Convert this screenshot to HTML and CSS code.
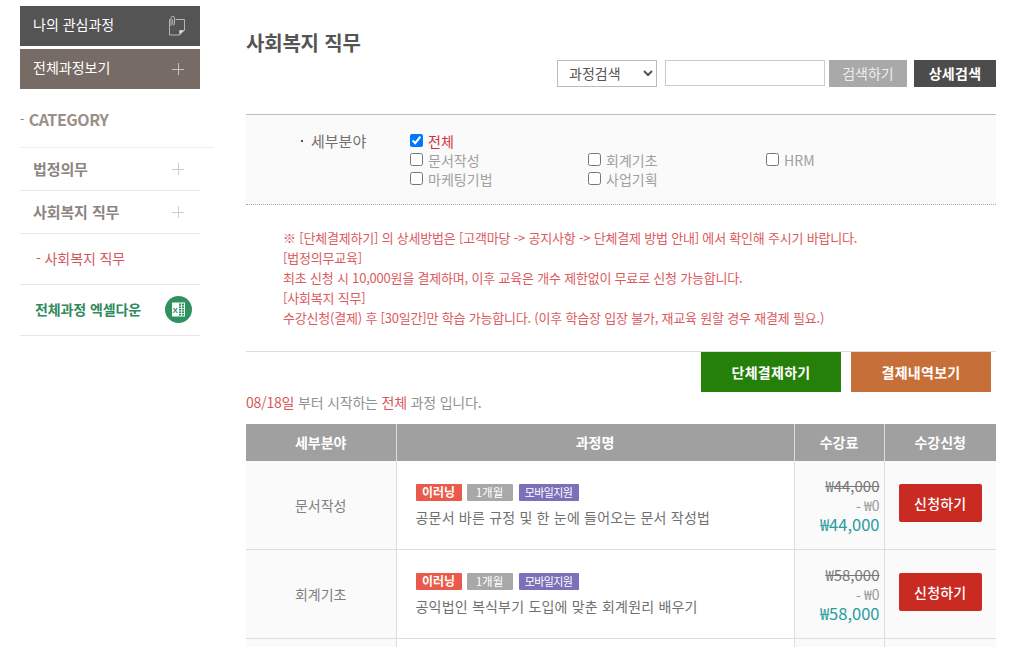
FILE: index.html
```html
<!DOCTYPE html>
<html lang="ko">
<head>
<meta charset="utf-8">
<title>사회복지 직무</title>
<link rel="stylesheet" href="styles.css">
</head>
<body>
<div class="page">
  <aside class="side">
    <a class="top-btn dark"><span class="tb-text">나의 관심과정</span>
      <svg class="clip" width="16" height="20" viewBox="0 0 16 20" fill="none" stroke="#b5b5b5" stroke-width="1"><path d="M6.5 3.5H15.5V14L10.5 19H.5V3.5H1.5"/><path d="M10.5 19V14.5H15.5"/><path d="M11 18l4-3.5h-4z" fill="#ddd" stroke="none"/><path d="M2 10V2a1.5 1.5 0 0 1 3.5 0V8a.9.9 0 0 1-1.8 0V3.5"/></svg>
    </a>
    <a class="top-btn brown"><span class="tb-text">전체과정보기</span><i class="plus light"></i></a>
    <h3 class="cat"><span class="dash">-</span>CATEGORY</h3>
    <ul class="menu">
      <li class="m-row first"><span class="m-text">법정의무</span><i class="plus"></i></li>
      <li class="m-row"><span class="m-text">사회복지 직무</span><i class="plus"></i></li>
      <li class="m-sub">- 사회복지 직무</li>
      <li class="m-excel"><span class="m-text x-text">전체과정 엑셀다운</span>
        <svg class="xls" width="27" height="27" viewBox="0 0 27 27"><circle cx="13.5" cy="13.5" r="13.5" fill="#2e9160"/><rect x="7" y="6.5" width="6" height="14" fill="#fff"/><rect x="13.5" y="7" width="6" height="13" fill="#2e9160" stroke="#fff"/><path d="M13.5 10h6M13.5 12.5h6M13.5 15h6M13.5 17.5h6M16.5 7v13" stroke="#fff" stroke-width=".8"/><text x="7.6" y="16.5" font-size="8" font-family="Liberation Sans" fill="#2e9160" font-weight="700">X</text></svg>
      </li>
    </ul>
  </aside>
  <main class="main">
    <h2 class="title">사회복지 직무</h2>
    <form class="search">
      <select class="sel"><option>과정검색</option></select>
      <input class="txt" type="text">
      <button type="button" class="s-btn grey">검색하기</button>
      <button type="button" class="s-btn black">상세검색</button>
    </form>
    <section class="filter">
      <div class="f-label"><span class="bullet"></span>세부분야</div>
      <div class="f-opts">
        <label class="opt all"><input type="checkbox" checked><span class="o-text">전체</span></label>
        <div class="f-grid">
          <label class="opt"><input type="checkbox"><span class="o-text">문서작성</span></label>
          <label class="opt"><input type="checkbox"><span class="o-text">회계기초</span></label>
          <label class="opt hrm"><input type="checkbox"><span class="o-text">HRM</span></label>
          <label class="opt"><input type="checkbox"><span class="o-text">마케팅기법</span></label>
          <label class="opt"><input type="checkbox"><span class="o-text">사업기획</span></label>
        </div>
      </div>
    </section>
    <section class="notice">
      <p>※ [단체결제하기] 의 상세방법은 [고객마당 -&gt; 공지사항 -&gt; 단체결제 방법 안내] 에서 확인해 주시기 바랍니다.</p>
      <p>[법정의무교육]</p>
      <p>최초 신청 시 10,000원을 결제하며, 이후 교육은 개수 제한없이 무료로 신청 가능합니다.</p>
      <p>[사회복지 직무]</p>
      <p>수강신청(결제) 후 [30일간]만 학습 가능합니다. (이후 학습장 입장 불가, 재교육 원할 경우 재결제 필요.)</p>
    </section>
    <div class="actions">
      <a class="a-btn green">단체결제하기</a>
      <a class="a-btn orange">결제내역보기</a>
    </div>
    <p class="info"><em>08/18일</em> 부터 시작하는 <em>전체</em> 과정 입니다.</p>
    <table class="list">
      <colgroup><col class="c1"><col class="c2"><col class="c3"><col class="c4"></colgroup>
      <thead><tr><th>세부분야</th><th>과정명</th><th>수강료</th><th>수강신청</th></tr></thead>
      <tbody>
        <tr>
          <td class="cat-cell">문서작성</td>
          <td class="name"><div class="tags"><b class="tag red">이러닝</b><b class="tag gray">1개월</b><b class="tag purple">모바일지원</b></div>공문서 바른 규정 및 한 눈에 들어오는 문서 작성법</td>
          <td class="price"><s>₩44,000</s><div class="minus">- ₩0</div><strong>₩44,000</strong></td>
          <td class="apply"><a class="ap-btn">신청하기</a></td>
        </tr>
        <tr>
          <td class="cat-cell">회계기초</td>
          <td class="name"><div class="tags"><b class="tag red">이러닝</b><b class="tag gray">1개월</b><b class="tag purple">모바일지원</b></div>공익법인 복식부기 도입에 맞춘 회계원리 배우기</td>
          <td class="price"><s>₩58,000</s><div class="minus">- ₩0</div><strong>₩58,000</strong></td>
          <td class="apply"><a class="ap-btn">신청하기</a></td>
        </tr>
        <tr class="cut">
          <td class="cat-cell"></td>
          <td class="name"></td>
          <td class="price"></td>
          <td class="apply"></td>
        </tr>
      </tbody>
    </table>
  </main>
</div>
</body>
</html>
```
FILE: styles.css
```css
* { box-sizing: border-box; }
html, body { margin: 0; padding: 0; height: 647px; overflow: hidden; background: #fff; }
body { font-family: "Noto Sans CJK KR", "Noto Sans", sans-serif; color: #666; font-size: 14px; }
.page { display: flex; align-items: flex-start; padding: 6px 0 0 20px; gap: 46px; }
.side { width: 180px; flex: none; }
.top-btn { display: flex; justify-content: space-between; align-items: center; height: 40px; padding: 0 14px 0 13px; color: #fff; font-size: 14px; margin-bottom: 3px; }
.top-btn.dark { background: #545454; }
.top-btn.brown { background: #776c65; }
.tb-text { padding-bottom: 4px; line-height: 20px; }
.clip { margin: 0 1px 0 0; }
.plus { position: relative; display: block; width: 12px; height: 12px; margin-right: 2px; }
.plus::before, .plus::after { content: ""; position: absolute; background: #ccc; }
.plus::before { left: 0; right: 0; top: 5.5px; height: 1px; }
.plus::after { top: 0; bottom: 0; left: 5.5px; width: 1px; }
.plus.light::before, .plus.light::after { background: #c9c2bd; }
.cat { margin: 0; padding-top: 15px; height: 56px; font-size: 16px; font-weight: 700; line-height: 24px; color: #9a8f87; letter-spacing: -.45px; width: 194px; border-bottom: 1px solid #eee; }
.dash { font-weight: 400; font-size: 12px; margin-right: 5px; vertical-align: 2px; color: #777; }
.menu { list-style: none; margin: 0; padding: 0; }
.m-row { display: flex; justify-content: space-between; align-items: center; height: 43px; padding: 0 14px 0 13px; font-size: 15px; font-weight: 700; color: #8d8580; border-bottom: 1px solid #e6e6e6; letter-spacing: -.1px; }
.m-text { padding-bottom: 1px; }
.m-text.x-text { padding-bottom: 3px; }
.m-sub { height: 51px; padding: 14px 0 0 16px; line-height: 20px; font-size: 14px; color: #d2565a; border-bottom: 1px solid #e6e6e6; letter-spacing: -.1px; }
.m-excel { display: flex; justify-content: space-between; align-items: center; height: 51px; padding: 0 8px 0 15px; font-size: 14px; font-weight: 700; color: #2f8a5d; border-bottom: 1px solid #e6e6e6; letter-spacing: -.1px; }
.xls { margin-bottom: 2px; }
.main { width: 750px; flex: none; }
.title { margin: 0; font-size: 20px; font-weight: 700; color: #555; line-height: 30px; padding-top: 22px; height: 54px; letter-spacing: -.2px; }
.search { display: flex; justify-content: flex-end; align-items: flex-start; height: 54px; }
.sel { width: 100px; height: 27px; font-family: inherit; font-size: 14px; color: #555; background: #fff; border: 1px solid #bbb; padding: 0 7px 2px; margin-right: 8px; border-radius: 0; }
.txt { width: 160px; height: 26px; border: 1px solid #ccc; margin: 0 4px 0 0; border-radius: 0; }
.s-btn { height: 27px; border: 0; padding: 0 0 2px; font-family: inherit; font-size: 14px; color: #fff; }
.s-btn.grey { width: 78px; background: #a9a9a9; margin-right: 7px; color: #eee; }
.s-btn.black { width: 82px; background: #4c4c4c; font-weight: 700; letter-spacing: .3px; }
.filter { display: flex; height: 91px; background: #fafafa; border-top: 1px solid #bbb; border-bottom: 1px dotted #aaa; padding: 16px 0 0 55px; }
.f-label { width: 109px; padding-top: 1px; font-size: 15px; line-height: 18px; color: #707070; }
.bullet { display: inline-block; width: 2px; height: 2px; margin-right: 8px; background: #555; vertical-align: 5px; }
.f-opts { flex: 1; }
.opt { display: flex; align-items: center; height: 19px; font-size: 14px; color: #a0a0a0; letter-spacing: .05px; }
.opt input { width: 13px; height: 13px; margin: 0 5px 0 0; }
.opt.all { color: #d03040; }
.f-grid { display: grid; grid-template-columns: 178px 178px 1fr; grid-template-rows: 19px 19px; }
.notice { height: 147px; padding: 23px 0 0 37px; border-bottom: 1px solid #ddd; }
.notice p { margin: 0; font-size: 13px; line-height: 20px; color: #dc5a5e; white-space: nowrap; letter-spacing: -.2px; }
.actions { display: flex; justify-content: flex-end; gap: 10px; padding-right: 5px; height: 40px; }
.a-btn { display: flex; align-items: center; justify-content: center; width: 140px; height: 40px; padding-bottom: 1px; color: #fff; font-size: 14px; font-weight: 700; letter-spacing: .3px; }
.a-btn.green { background: #25800a; }
.a-btn.orange { background: #c76f39; }
.info { margin: 0; height: 32px; font-size: 14px; line-height: 20px; color: #929292; letter-spacing: -.2px; }
.info em { font-style: normal; color: #d8575a; }
.list { width: 750px; table-layout: fixed; border-collapse: collapse; }
.c1 { width: 150px; } .c2 { width: 398px; } .c3 { width: 90px; } .c4 { width: 112px; }
.list th { height: 37px; padding: 0 0 2px; background: #a0a0a0; color: #fff; font-size: 14px; font-weight: 700; border-left: 1px solid #ddd; }
.list th:first-child { border-left: 0; }
.list td { height: 89px; padding: 0; border-top: 1px solid #ddd; border-left: 1px solid #ddd; }
.list tr:first-child td { border-top: 0; height: 88px; }
.list tr.cut td { height: 9px; }
.list td:first-child { border-left: 0; }
.cat-cell { background: #fafafa; text-align: center; font-size: 14px; color: #808080; }
.name { padding-left: 19px !important; font-size: 14px; color: #707070; line-height: 20px; letter-spacing: .2px; }
.tags { display: flex; margin: 2px 0 6px; letter-spacing: 0; }
.tag { display: flex; align-items: center; justify-content: center; height: 17px; padding-bottom: 1px; font-size: 12px; font-weight: 400; color: #fff; border-radius: 1px; margin-right: 5px; }
.tag.red { width: 46px; background: #ea5a4a; font-weight: 700; }
.tag.gray { width: 46px; background: #a8a8a8; margin-right: 6px; font-size: 11.5px; }
.tag.purple { width: 60px; background: #7b70b9; font-size: 11px; letter-spacing: -.6px; }
.price { background: #fafafa; text-align: right; padding: 0 4px 0 0 !important; font-size: 14px; color: #777; }
.price s, .price .minus, .price strong { display: block; }
.price s { font-size: 15px; line-height: 20px; }
.price .minus { color: #999; font-size: 14px; line-height: 19px; }
.price strong { font-size: 16.5px; font-weight: 400; line-height: 19px; color: #2a9d9d; }
.apply { background: #fafafa; text-align: center; padding-bottom: 4px !important; }
.ap-btn { display: inline-flex; align-items: center; justify-content: center; width: 83px; height: 38px; background: #c92a22; color: #fff; font-size: 14px; font-weight: 500; border-radius: 2px; letter-spacing: .2px; }
```
